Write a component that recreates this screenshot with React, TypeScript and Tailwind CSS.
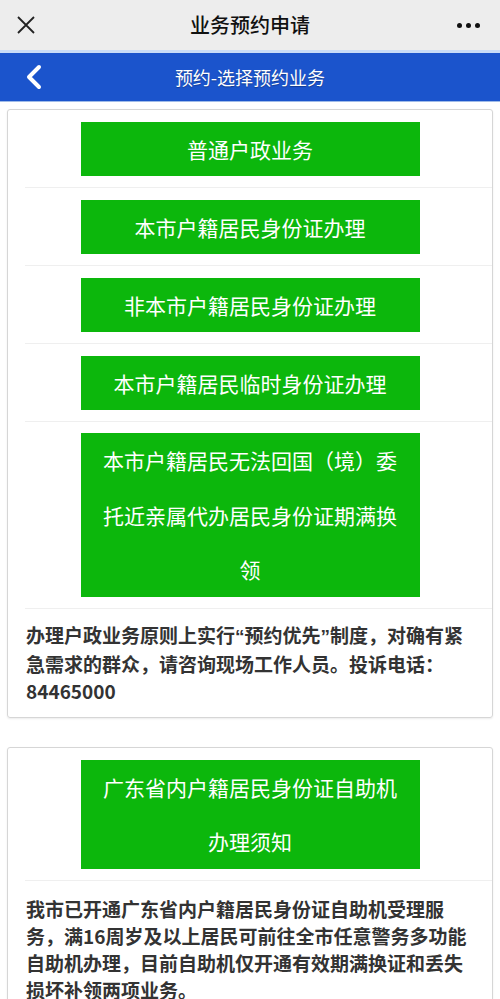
import React from "react";

const font = { fontFamily: '"Noto Sans CJK SC", "Noto Sans", sans-serif' };

function Btn({ children, multi }: { children: React.ReactNode; multi?: boolean }) {
  return (
    <div className="flex justify-center">
      <div
        className={`w-[339px] bg-[#0cb70c] text-white text-[21px] text-center px-[16px] ${
          multi ? "leading-[54.5px] py-[0px]" : "h-[54px] leading-[54px]"
        }`}
      >
        {children}
      </div>
    </div>
  );
}

function Sep() {
  return <div className="ml-[17px] h-px bg-[#efefef]" />;
}

export default function App() {
  return (
    <div className="w-[500px] h-[999px] overflow-hidden bg-white" style={font}>
      {/* top bar */}
      <div className="h-[50px] bg-[#ededed] flex items-center justify-between px-[14px] relative">
        <svg width="22" height="22" viewBox="0 0 22 22" className="ml-[1px]">
          <path d="M3 3 L19 19 M19 3 L3 19" stroke="#222" strokeWidth="1.8" />
        </svg>
        <div className="absolute left-0 right-0 text-center text-[20px] text-[#111] font-medium pointer-events-none">
          业务预约申请
        </div>
        <div className="flex gap-[4px] mr-[6px]">
          <span className="w-[5px] h-[5px] rounded-full bg-[#111]" />
          <span className="w-[5px] h-[5px] rounded-full bg-[#111]" />
          <span className="w-[5px] h-[5px] rounded-full bg-[#111]" />
        </div>
      </div>
      {/* blue bar */}
      <div className="h-[3px] bg-[#c9dcf7]" />
      <div className="h-[48px] bg-[#1b54cc] flex items-center relative">
        <svg width="22" height="26" viewBox="0 0 22 26" className="ml-[23px]">
          <path d="M16 3 L6 13 L16 23" stroke="#fff" strokeWidth="4" fill="none" strokeLinecap="round" strokeLinejoin="round" />
        </svg>
        <div className="absolute left-0 right-0 text-center text-[18px] text-white [text-shadow:0_1px_1px_rgba(0,0,0,0.3)]">
          预约-选择预约业务
        </div>
      </div>
      <div className="h-[1px] bg-[#9fbbe8]" />

      {/* card 1 */}
      <div className="mt-[7px] mx-[7px] border border-[#d6d6d6] rounded-[3px] shadow-[0_1px_2px_rgba(0,0,0,0.08)]">
        <div className="pt-[12px]">
          <Btn>普通户政业务</Btn>
          <div className="h-[11px]" />
          <Sep />
          <div className="h-[12px]" />
          <Btn>本市户籍居民身份证办理</Btn>
          <div className="h-[11px]" />
          <Sep />
          <div className="h-[12px]" />
          <Btn>非本市户籍居民身份证办理</Btn>
          <div className="h-[11px]" />
          <Sep />
          <div className="h-[12px]" />
          <Btn>本市户籍居民临时身份证办理</Btn>
          <div className="h-[11px]" />
          <Sep />
          <div className="h-[11px]" />
          <Btn multi>本市户籍居民无法回国（境）委托近亲属代办居民身份证期满换领</Btn>
          <div className="h-[11px]" />
          <Sep />
        </div>
        <div className="pl-[18px] pr-[20px] pt-[12px] pb-[13px] text-[19px] leading-[27px] font-bold text-[#333]">
          办理户政业务原则上实行
          <span className="font-['Liberation_Sans',sans-serif]">“</span>
          预约优先
          <span className="font-['Liberation_Sans',sans-serif]">”</span>
          制度，对确有紧急需求的群众，请咨询现场工作人员。投诉电话：84465000
        </div>
      </div>

      {/* card 2 */}
      <div className="mt-[29px] mx-[7px] border border-[#d6d6d6] rounded-[3px] shadow-[0_1px_2px_rgba(0,0,0,0.08)]">
        <div className="pt-[12px]">
          <Btn multi>广东省内户籍居民身份证自助机办理须知</Btn>
          <div className="h-[11px]" />
          <Sep />
        </div>
        <div className="pl-[18px] pr-[20px] pt-[14px] pb-[14px] text-[19px] leading-[27px] font-bold text-[#333]">
          我市已开通广东省内户籍居民身份证自助机受理服务，满16周岁及以上居民可前往全市任意警务多功能自助机办理，目前自助机仅开通有效期满换证和丢失损坏补领两项业务。
        </div>
      </div>
    </div>
  );
}
